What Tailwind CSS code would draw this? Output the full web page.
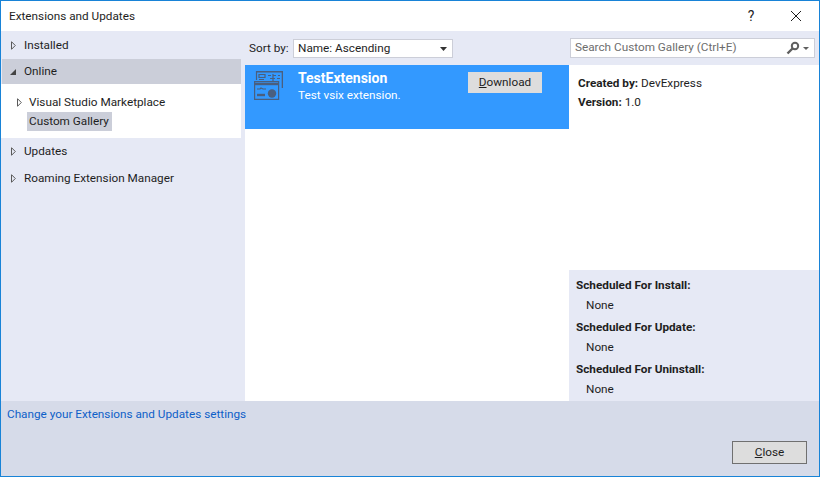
<!DOCTYPE html>
<html lang="en">
<head>
    <meta charset="UTF-8">
    <title>Extensions and Updates</title>
    <script src="https://cdn.jsdelivr.net/npm/@tailwindcss/browser@4"></script>
</head>
<body class="w-[820px] h-[477px] overflow-hidden bg-white font-['Roboto',sans-serif] text-[11.75px] text-[#1e1e1e]">
    <div class="w-full h-full flex flex-col border border-[#1883d7]">
        <!-- Title bar -->
        <div class="h-[30px] flex items-center shrink-0 bg-white">
            <span class="ml-2 flex-1 pt-[1px]">Extensions and Updates</span>
            <span class="w-[14px] text-center text-[14px] mr-[32px]">?</span>
            <svg class="w-[12px] h-[12px] mr-[17px]" viewBox="0 0 12 12" fill="none" stroke="#1e1e1e" stroke-width="1"><path d="M1 1l10 10M11 1L1 11"/></svg>
        </div>

        <!-- Main -->
        <div class="flex-1 flex min-h-0 bg-[#e6e9f5]">
            <!-- Left tree -->
            <div class="w-[244px] shrink-0 pt-[1px]">
                <div class="h-[26px] flex items-center">
                    <svg class="w-[5px] h-[9px] ml-[10px] mr-[8px]" viewBox="0 0 5 9" fill="none" stroke="#5a5a5a"><path d="M.5.7L4.3 4.5.5 8.3z"/></svg>
                    <span class="pt-[1px]">Installed</span>
                </div>
                <div class="h-[25px] mt-[1px] w-[239px] ml-[1px] flex items-center bg-[#cbced9]">
                    <svg class="w-[8px] h-[8px] ml-[7px] mr-[7px]" viewBox="0 0 8 8" fill="#444"><path d="M7 1v6H1z"/></svg>
                    <span class="pt-[1px]">Online</span>
                </div>
                <div class="h-[54px] w-[240px] bg-white pt-[9px]">
                    <div class="h-[19px] flex items-center">
                        <svg class="w-[5px] h-[9px] ml-[16px] mr-[7px]" viewBox="0 0 5 9" fill="none" stroke="#5a5a5a"><path d="M.5.7L4.3 4.5.5 8.3z"/></svg>
                        <span class="pt-[1px]">Visual Studio Marketplace</span>
                    </div>
                    <div class="h-[19px] ml-[26px] px-[2px] pt-[1px] w-[85px] flex items-center whitespace-nowrap bg-[#cbced9]">Custom Gallery</div>
                </div>
                <div class="h-[27px] flex items-center">
                    <svg class="w-[5px] h-[9px] ml-[10px] mr-[8px]" viewBox="0 0 5 9" fill="none" stroke="#5a5a5a"><path d="M.5.7L4.3 4.5.5 8.3z"/></svg>
                    <span class="pt-[1px]">Updates</span>
                </div>
                <div class="h-[27px] flex items-center">
                    <svg class="w-[5px] h-[9px] ml-[10px] mr-[8px]" viewBox="0 0 5 9" fill="none" stroke="#5a5a5a"><path d="M.5.7L4.3 4.5.5 8.3z"/></svg>
                    <span class="pt-[1px]">Roaming Extension Manager</span>
                </div>
            </div>

            <!-- Middle list -->
            <div class="w-[324px] shrink-0 flex flex-col">
                <div class="h-[34px] shrink-0 flex items-center pl-[4px] pt-[1px]">
                    <span class="w-[44px]">Sort by:</span>
                    <div class="w-[160px] h-[19px] bg-white border border-[#ccced8] flex items-center justify-between pl-[4px] pr-[5px]">
                        <span>Name: Ascending</span>
                        <svg class="w-[7px] h-[4px]" viewBox="0 0 7 4" fill="#333"><path d="M0 0h7L3.5 4z"/></svg>
                    </div>
                </div>
                <div class="flex-1 bg-white">
                    <div class="h-[64px] bg-[#3399ff] flex text-white">
                        <svg class="w-[29px] h-[29px] ml-[9px] mt-[6px] shrink-0" viewBox="0 0 29 29" fill="none" stroke="#4a5f7f" stroke-width="1.2">
                            <path d="M2 .7h26.5V17" stroke-width="1.6"/>
                            <path d="M2.5 0v9"/>
                            <path d="M5 3.5h6v3H5zM5 8.5h5M14 4.5h3M19 4.5h3M24 4.5h2M16 7.5h5M18 10.5h6M19 3v10M23 7.5h3"/>
                            <path d="M.6 10.6h24v17.8H.6z" fill="#3399ff"/>
                            <path d="M1 13h23" stroke-width="2.4"/>
                            <path d="M3 18h3l1-1 2 1h3"/>
                            <path d="M3 24h8" stroke-width="2.4"/>
                            <circle cx="18" cy="22.5" r="4.2" fill="#4a5f7f" stroke="none"/>
                        </svg>
                        <div class="ml-[15px] w-[170px] pt-[4px]">
                            <div class="font-bold text-[14px] leading-[18px]">TestExtension</div>
                            <div class="leading-[16px]">Test vsix extension.</div>
                        </div>
                        <div class="mt-[7px] w-[74px] h-[21px] pt-[1px] bg-[#dddddd] text-[#1e1e1e] flex items-center justify-center"><span><span class="underline">D</span>ownload</span></div>
                    </div>
                </div>
            </div>

            <!-- Right details -->
            <div class="flex-1 flex flex-col">
                <div class="h-[34px] shrink-0 pt-[7px] pl-[1px]">
                    <div class="w-[245px] h-[20px] bg-white border border-[#ccced8] flex items-center justify-between pl-[4px] pr-[5px] text-[#6d6d6d]">
                        <span>Search Custom Gallery (Ctrl+E)</span>
                        <span class="flex items-center gap-[3px]">
                            <svg class="w-[14px] h-[14px]" viewBox="0 0 14 14" fill="none" stroke="#5f5f5f" stroke-width="2"><circle cx="9" cy="5" r="3.2"/><path d="M6.5 7.5L1.5 12.5" stroke-width="2.4"/></svg>
                            <svg class="w-[6px] h-[3px]" viewBox="0 0 6 3" fill="#5f5f5f"><path d="M0 0h6L3 3z"/></svg>
                        </span>
                    </div>
                </div>
                <div class="h-[205px] shrink-0 bg-white pl-[9px] pt-[9px] leading-[18px]">
                    <div><b>Created by:</b> DevExpress</div>
                    <div class="mt-[1px]"><b>Version:</b> 1.0</div>
                </div>
                <div class="flex-1 pl-[7px] pt-[5px] leading-[20px]">
                    <div class="font-bold">Scheduled For Install:</div>
                    <div class="pl-[10px] mb-[2px]">None</div>
                    <div class="font-bold">Scheduled For Update:</div>
                    <div class="pl-[10px] mb-[2px]">None</div>
                    <div class="font-bold">Scheduled For Uninstall:</div>
                    <div class="pl-[10px]">None</div>
                </div>
            </div>
        </div>

        <!-- Footer -->
        <div class="h-[75px] shrink-0 bg-[#d6dbe9] flex flex-col">
            <div class="pl-[6px] pt-[4px] text-[#0e5fc8] leading-[18px]">Change your Extensions and Updates settings</div>
            <div class="flex-1 flex items-end justify-end pr-[12px] pb-[12px]">
                <div class="w-[75px] h-[23px] bg-[#dddddd] border border-[#707070] flex items-center justify-center"><span><span class="underline">C</span>lose</span></div>
            </div>
        </div>
    </div>
</body>
</html>
